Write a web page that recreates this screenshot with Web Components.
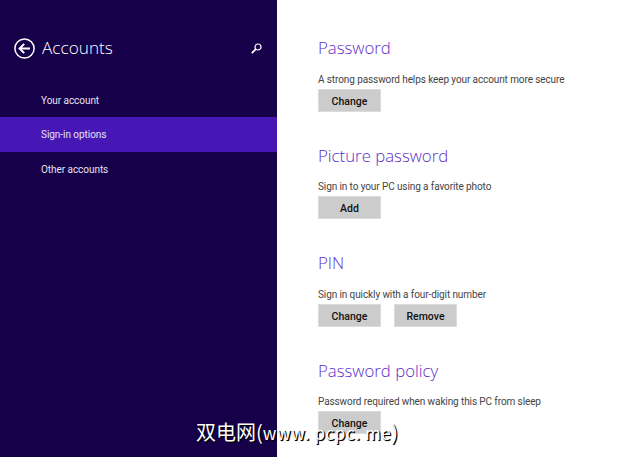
<!DOCTYPE html>
<html lang="en">
<head>
<meta charset="utf-8">
<title>Accounts</title>
<style>
  html, body { margin: 0; height: 100%; overflow: hidden; background: #fff; }
  body { font-family: Roboto, "Open Sans", sans-serif; }
</style>
</head>
<body>
<settings-page>
  <settings-nav slot="nav" heading="Accounts">
    <nav-row>Your account</nav-row>
    <nav-row selected>Sign-in options</nav-row>
    <nav-row>Other accounts</nav-row>
  </settings-nav>
  <option-group heading="Password" text="A strong password helps keep your account more secure">
    <flat-button>Change</flat-button>
  </option-group>
  <option-group heading="Picture password" text="Sign in to your PC using a favorite photo">
    <flat-button>Add</flat-button>
  </option-group>
  <option-group heading="PIN" text="Sign in quickly with a four-digit number">
    <flat-button>Change</flat-button>
    <flat-button>Remove</flat-button>
  </option-group>
  <option-group heading="Password policy" text="Password required when waking this PC from sleep">
    <flat-button>Change</flat-button>
  </option-group>
  <water-mark slot="mark">双电网(<span style="font-size:17px;letter-spacing:.6px">www. pcpc. me</span>)</water-mark>
</settings-page>

<script>
class SettingsPage extends HTMLElement {
  constructor() {
    super();
    this.attachShadow({ mode: "open" }).innerHTML = `
      <style>
        :host { display: flex; position: relative; width: 640px; height: 457px; overflow: hidden; }
        .side { width: 277px; flex: none; background: #16004a; }
        .main { flex: 1; padding: 34px 0 0 41px; }
      </style>
      <div class="side"><slot name="nav"></slot></div>
      <div class="main"><slot></slot></div>
      <slot name="mark"></slot>`;
  }
}

class SettingsNav extends HTMLElement {
  constructor() {
    super();
    this.attachShadow({ mode: "open" }).innerHTML = `
      <style>
        :host { display: block; padding-top: 34px; color: #fff; }
        header { display: flex; align-items: center; height: 28px; padding: 0 15px 0 14px; }
        h1 { flex: 1; margin: 0 0 0 7px; font-family: "Open Sans", sans-serif; font-size: 17.2px; font-weight: 300; line-height: 28px; }
        .rows { margin-top: 20.5px; }
      </style>
      <header>
        <svg width="21" height="21" viewBox="0 0 21 21" fill="none" stroke="#fff">
          <circle cx="10.5" cy="10.5" r="9.6" stroke-width="1.5"/>
          <path d="M16 10.5H6M10.2 5.9 5.6 10.5l4.6 4.6" stroke-width="2"/>
        </svg>
        <h1></h1>
        <svg width="11" height="11" viewBox="0 0 11 11" fill="none" stroke="#fff">
          <circle cx="7" cy="4" r="3" stroke-width="1.2"/>
          <path d="M4.8 6.2 .8 10.2" stroke-width="1.7"/>
        </svg>
      </header>
      <div class="rows"><slot></slot></div>`;
    this.shadowRoot.querySelector("h1").textContent = this.getAttribute("heading");
  }
}

class NavRow extends HTMLElement {
  constructor() {
    super();
    this.attachShadow({ mode: "open" }).innerHTML = `
      <style>
        :host { display: block; height: 34.5px; padding-left: 41px; font-size: 10px; letter-spacing: -.05px; line-height: 35px; color: #e6e2f0; }
        :host([selected]) { background: #4617b4; }
      </style>
      <slot></slot>`;
  }
}

class OptionGroup extends HTMLElement {
  constructor() {
    super();
    this.attachShadow({ mode: "open" }).innerHTML = `
      <style>
        :host { display: block; height: 107.5px; }
        h2 { margin: 0; font-family: "Open Sans", sans-serif; font-size: 16.8px; font-weight: 300; line-height: 27px; color: #5b2ec8; }
        p { margin: 9.5px 0 0; font-size: 10px; letter-spacing: -.1px; line-height: 17px; color: #444; }
        .actions { display: flex; gap: 13px; margin-top: 1px; }
      </style>
      <h2></h2>
      <p></p>
      <div class="actions"><slot></slot></div>`;
    this.shadowRoot.querySelector("h2").textContent = this.getAttribute("heading");
    this.shadowRoot.querySelector("p").textContent = this.getAttribute("text");
  }
}

class FlatButton extends HTMLElement {
  constructor() {
    super();
    this.attachShadow({ mode: "open" }).innerHTML = `
      <style>
        :host { display: block; box-sizing: border-box; width: 63px; height: 23px; background: #cccccc; border: 1px solid #dcdcdc;
          font-size: 10.5px; font-weight: 500; line-height: 23px; text-align: center; color: #111; }
      </style>
      <slot></slot>`;
  }
}

class WaterMark extends HTMLElement {
  constructor() {
    super();
    this.attachShadow({ mode: "open" }).innerHTML = `
      <style>
        :host { position: absolute; left: 196px; top: 418px; font-family: "Noto Sans CJK SC", "Liberation Sans", sans-serif; font-size: 20px;
          line-height: 28px; white-space: nowrap; color: #fff; text-shadow: 1px 1px 1px #000, 1px 1px 0 #000; }
      </style>
      <slot></slot>`;
  }
}

customElements.define("settings-page", SettingsPage);
customElements.define("settings-nav", SettingsNav);
customElements.define("nav-row", NavRow);
customElements.define("option-group", OptionGroup);
customElements.define("flat-button", FlatButton);
customElements.define("water-mark", WaterMark);
</script>
</body>
</html>
